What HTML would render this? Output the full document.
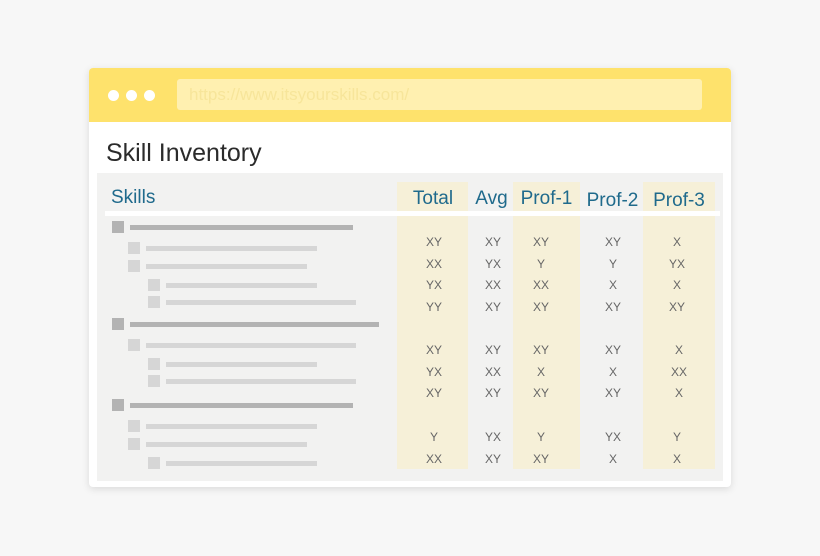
<!DOCTYPE html>
<html><head><style>
body{margin:0;width:820px;height:556px;background:#f7f7f7;position:relative;overflow:hidden;font-family:"Liberation Sans",sans-serif}
.a{position:absolute}
.card{left:89px;top:68px;width:642px;height:419px;background:#fff;border-radius:4px;box-shadow:0 2px 8px rgba(0,0,0,.12)}
.hdr{left:89px;top:68px;width:642px;height:54px;background:#fee26c;border-radius:4px 4px 0 0}
.url{left:177px;top:79px;width:525px;height:31px;background:#fff0b0;border-radius:3px;color:#f7e59a;font-size:17px;line-height:31px;padding-left:12px;box-sizing:border-box}
.dot{width:11px;height:11px;border-radius:50%;background:#fff;top:90px}
.panel{left:97px;top:173px;width:626px;height:308px;background:#f2f2f1}
.col{top:182px;height:287px;background:#f6f0d8}
.hd{color:#1f6a8c;font-size:19px;top:188px;text-align:center}
.sq1{width:12px;height:12px;background:#b3b3b3}
.sq2{width:12px;height:12px;background:#d6d6d6}
.b1{height:5px;background:#b3b3b3}
.b2{height:5px;background:#d6d6d6}
.v{font-size:12px;color:#666;width:60px;text-align:center;margin-left:-30px;line-height:14px}
</style></head><body>
<div class="a card"></div>
<div class="a hdr"></div>
<div class="a dot" style="left:108px"></div>
<div class="a dot" style="left:126px"></div>
<div class="a dot" style="left:144px"></div>
<div class="a url">https://www.itsyourskills.com/</div>
<div class="a" style="left:106px;top:139px;font-size:25px;color:#2b2b2b">Skill Inventory</div>
<div class="a panel"></div>
<div class="a col" style="left:397px;width:71px"></div>
<div class="a col" style="left:513px;width:67px"></div>
<div class="a col" style="left:643px;width:72px"></div>
<div class="a" style="left:105px;top:211px;width:615px;height:5px;background:#fff"></div>
<div class="a hd" style="left:111px;text-align:left;top:187px">Skills</div>
<div class="a hd" style="left:398px;width:70px">Total</div>
<div class="a hd" style="left:470px;width:43px">Avg</div>
<div class="a hd" style="left:513px;width:67px">Prof-1</div>
<div class="a hd" style="left:582px;width:61px;top:190px">Prof-2</div>
<div class="a hd" style="left:643px;width:72px;top:190px">Prof-3</div>

<div class="a sq1" style="left:112px;top:221px"></div><div class="a b1" style="left:130px;top:225px;width:223px"></div>
<div class="a sq2" style="left:128px;top:242px"></div><div class="a b2" style="left:146px;top:246px;width:171px"></div>
<div class="a sq2" style="left:128px;top:260px"></div><div class="a b2" style="left:146px;top:264px;width:161px"></div>
<div class="a sq2" style="left:148px;top:279px"></div><div class="a b2" style="left:166px;top:283px;width:151px"></div>
<div class="a sq2" style="left:148px;top:296px"></div><div class="a b2" style="left:166px;top:300px;width:190px"></div>
<div class="a sq1" style="left:112px;top:318px"></div><div class="a b1" style="left:130px;top:322px;width:249px"></div>
<div class="a sq2" style="left:128px;top:339px"></div><div class="a b2" style="left:146px;top:343px;width:210px"></div>
<div class="a sq2" style="left:148px;top:358px"></div><div class="a b2" style="left:166px;top:362px;width:151px"></div>
<div class="a sq2" style="left:148px;top:375px"></div><div class="a b2" style="left:166px;top:379px;width:190px"></div>
<div class="a sq1" style="left:112px;top:399px"></div><div class="a b1" style="left:130px;top:403px;width:223px"></div>
<div class="a sq2" style="left:128px;top:420px"></div><div class="a b2" style="left:146px;top:424px;width:171px"></div>
<div class="a sq2" style="left:128px;top:438px"></div><div class="a b2" style="left:146px;top:442px;width:161px"></div>
<div class="a sq2" style="left:148px;top:457px"></div><div class="a b2" style="left:166px;top:461px;width:151px"></div>

<div class="a v" style="left:434px;top:232px;line-height:21.7px">XY<br>XX<br>YX<br>YY</div>
<div class="a v" style="left:493px;top:232px;line-height:21.7px">XY<br>YX<br>XX<br>XY</div>
<div class="a v" style="left:541px;top:232px;line-height:21.7px">XY<br>Y<br>XX<br>XY</div>
<div class="a v" style="left:613px;top:232px;line-height:21.7px">XY<br>Y<br>X<br>XY</div>
<div class="a v" style="left:677px;top:232px;line-height:21.7px">X<br>YX<br>X<br>XY</div>

<div class="a v" style="left:434px;top:340px;line-height:21.5px">XY<br>YX<br>XY</div>
<div class="a v" style="left:493px;top:340px;line-height:21.5px">XY<br>XX<br>XY</div>
<div class="a v" style="left:541px;top:340px;line-height:21.5px">XY<br>X<br>XY</div>
<div class="a v" style="left:613px;top:340px;line-height:21.5px">XY<br>X<br>XY</div>
<div class="a v" style="left:679px;top:340px;line-height:21.5px">X<br>XX<br>X</div>

<div class="a v" style="left:434px;top:426px;line-height:22px">Y<br>XX</div>
<div class="a v" style="left:493px;top:426px;line-height:22px">YX<br>XY</div>
<div class="a v" style="left:541px;top:426px;line-height:22px">Y<br>XY</div>
<div class="a v" style="left:613px;top:426px;line-height:22px">YX<br>X</div>
<div class="a v" style="left:677px;top:426px;line-height:22px">Y<br>X</div>
</body></html>
